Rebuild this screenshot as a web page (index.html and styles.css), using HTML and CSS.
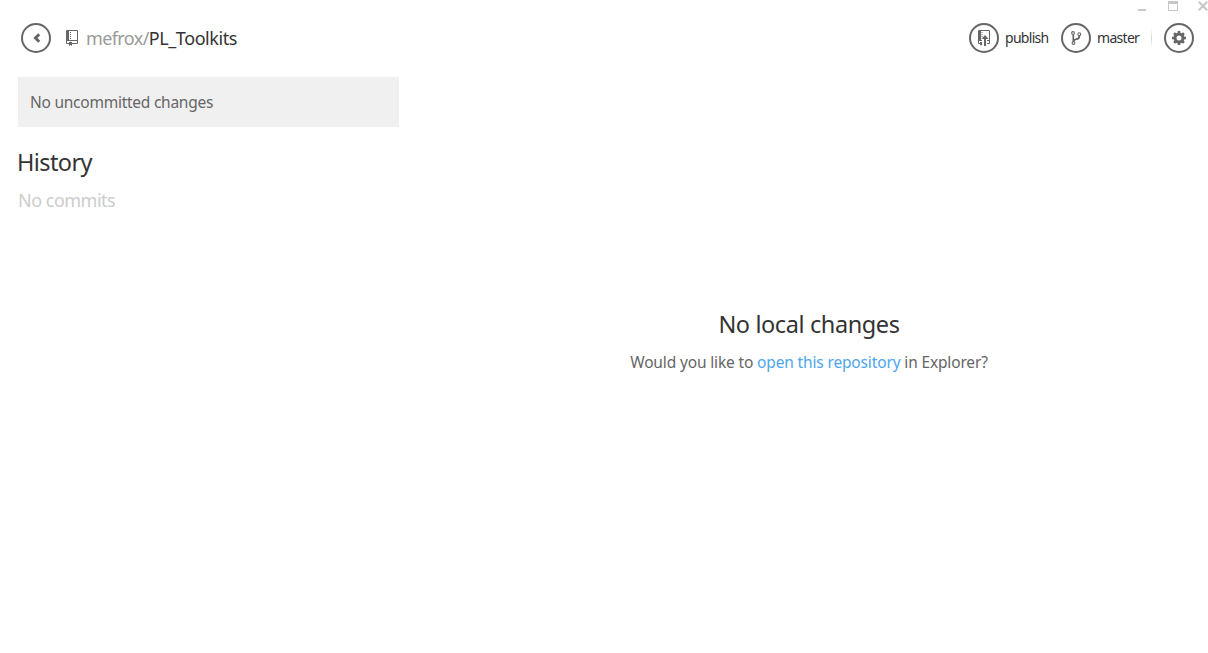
FILE: index.html
```html
<!DOCTYPE html>
<html lang="en">
<head>
<meta charset="utf-8">
<title>mefrox/PL_Toolkits</title>
<link rel="stylesheet" href="styles.css">
</head>
<body>
<div class="window">
  <div class="window-controls">
    <svg width="10" height="12" viewBox="0 0 10 12"><path d="M0 9h8v2H0z"/></svg>
    <svg width="10" height="12" viewBox="0 0 10 12"><path fill-rule="evenodd" d="M0 1h10v10H0zM1 4v6h8V4z"/></svg>
    <svg width="10" height="12" viewBox="0 0 10 12"><path d="M.8 1.800l8.400 8.400M9.200 1.800l-8.400 8.400" fill="none" stroke="#c8c8c8" stroke-width="2.200"/></svg>
  </div>
  <header class="toolbar">
    <button class="round" aria-label="Back">
      <svg width="30" height="30" viewBox="0 0 30 30"><path d="M18.200 11.200l-3.700 3.800 3.700 3.800" fill="none" stroke="#666" stroke-width="3"/></svg>
    </button>
    <svg class="repo-icon" width="12" height="16" viewBox="0 0 12 16"><path fill-rule="evenodd" d="M0 1q0-1 1-1h10q1 0 1 1v12q0 1-1 1H6v2l-1.500-1L3 16v-2H1q-1 0-1-1zM3 1v9h8V1zM1 11v2h2v-1h3v1h5v-2zM4 2h1v1H4zM4 4h1v1H4zM4 6h1v1H4zM4 8h1v1H4z"/></svg>
    <h1 class="repo"><span class="owner">mefrox/</span><span class="name">PL_Toolkits</span></h1>
    <nav class="actions">
      <button class="round" aria-label="Publish">
        <svg width="30" height="30" viewBox="0 0 30 30"><path fill-rule="evenodd" d="M9 8q0-1 1-1h10q1 0 1 1v12q0 1-1 1h-2v-1h2v-2h-2v-1h2V8h-8v9h1v1h-3v2h1v-1h2v3.500l-1-.8-1 .8V21h-1q-1 0-1-1z"/><path d="M12.500 9h1v1h-1zM12.500 11h1v1h-1zM12.500 13h1v1h-1zM16 12l3.500 4h-2.500v7h-2v-7h-2.500z"/></svg>
      </button>
      <span class="label publish">publish</span>
      <button class="round branch" aria-label="Branch">
        <svg width="30" height="30" viewBox="0 0 30 30"><g fill="none" stroke="#666"><circle cx="12" cy="10" r="1.400" stroke-width="1.100"/><circle cx="18.300" cy="11.200" r="1.400" stroke-width="1.100"/><circle cx="12.500" cy="20" r="1.400" stroke-width="1.100"/><path d="M12.300 11.500v7M18.300 12.700q.2 3-2.800 3.500-2.500.4-3 2.300" stroke-width="1.700"/></g></svg>
      </button>
      <span class="label master">master</span>
      <span class="divider"></span>
      <button class="round" aria-label="Settings">
        <svg width="30" height="30" viewBox="0 0 30 30"><circle cx="15" cy="15" r="4" fill="none" stroke="#666" stroke-width="3"/><path d="M15 8v3M15 19v3M8 15h3M19 15h3M10.050 10.050l2 2M17.950 17.950l2 2M10.050 19.950l2-2M17.950 12.050l2-2" stroke="#666" stroke-width="2.600"/></svg>
      </button>
    </nav>
  </header>
  <main class="content">
    <aside class="sidebar">
      <div class="uncommitted">No uncommitted changes</div>
      <h2 class="history">History</h2>
      <p class="no-commits">No commits</p>
    </aside>
    <section class="detail">
      <h2 class="empty-title">No local changes</h2>
      <p class="empty-text">Would you like to <a class="link">open this repository</a> in Explorer?</p>
    </section>
  </main>
</div>
</body>
</html>
```
FILE: styles.css
```css
* { box-sizing: border-box; }
body { margin: 0; background: #fff; color: #333; font-family: "Noto Sans", "Open Sans", sans-serif; }
h1, h2, p { margin: 0; font-weight: 400; white-space: nowrap; }
svg { display: block; fill: #666; flex: none; }
.window { height: 653px; display: flex; flex-direction: column; overflow: hidden; }
.window-controls { height: 12px; display: flex; justify-content: flex-end; gap: 20px; }
.window-controls svg { fill: #c8c8c8; }
.toolbar { height: 65px; display: flex; align-items: flex-start; padding: 11px 14px 0 21px; }
.round { width: 30px; height: 30px; flex: none; padding: 0; border: 0; border-radius: 50%; background: #fff; box-shadow: inset 0 0 0 2px #666; }
.repo-icon { margin: 7px 0 0 15px; }
.repo { margin-left: 8px; font-size: 18px; line-height: 30px; display: flex; }
.owner { color: #999; letter-spacing: -.6px; }
.name { letter-spacing: -.42px; }
.actions { margin-left: auto; display: flex; }
.label { font-size: 14px; line-height: 29px; margin-left: 6px; white-space: nowrap; }
.publish { width: 44px; margin-right: 12px; letter-spacing: -.7px; }
.master { width: 43px; margin-right: 11px; letter-spacing: -.7px; }
.divider { width: 1px; height: 20px; margin: 5px 12px 0 0; background: linear-gradient(#fff, #d4d4d4 50%, #fff); }
.content { flex: 1; display: flex; }
.sidebar { width: 410px; padding: 0 11px 0 18px; }
.uncommitted { height: 50px; padding-left: 12px; background: #f0f0f0; color: #666; font-size: 15.500px; line-height: 50px; letter-spacing: -.25px; }
.history { margin: 18px 0 0 -1px; font-size: 23.500px; line-height: 34px; letter-spacing: -.6px; }
.no-commits { margin-top: 8px; color: #ccc; font-size: 18px; line-height: 26px; letter-spacing: -.5px; }
.detail { flex: 1; display: flex; flex-direction: column; align-items: center; padding-top: 230px; }
.empty-title { font-size: 23.500px; line-height: 34px; letter-spacing: -.4px; }
.empty-text { margin-top: 8px; color: #666; font-size: 15.500px; line-height: 26px; letter-spacing: -.15px; }
.link { color: #4ea6ea; }
```
